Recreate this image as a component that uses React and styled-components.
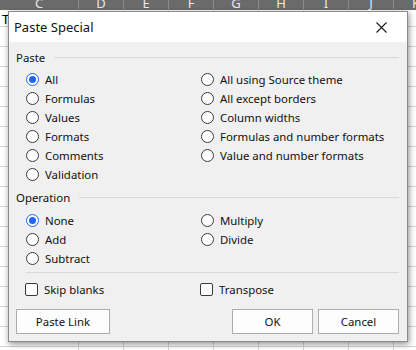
import React from 'react';
import styled, { createGlobalStyle } from 'styled-components';

const GlobalStyle = createGlobalStyle`
  html, body {
    margin: 0;
    padding: 0;
    width: 416px;
    height: 350px;
    overflow: hidden;
    background: #fff;
    font-family: "Noto Sans", "Open Sans", sans-serif;
  }
`;

// Spreadsheet behind the dialog
const Sheet = styled.div`
  position: relative;
  width: 416px;
  height: 350px;
  background-color: #fff;
  overflow: hidden;
`;

const GridLines = styled.div`
  position: absolute;
  inset: 10px 0 0 0;
  background-image: repeating-linear-gradient(to bottom, transparent 0, transparent 16px, #d4d4d4 16px, #d4d4d4 17px, transparent 17px, transparent 20px);
  background-size: 100% 20px;
`;

const HeaderRow = styled.div`
  position: relative;
  display: flex;
  height: 10px;
  background: #6b6b6b;
  overflow: hidden;
`;

const ColHead = styled.div`
  flex: 0 0 ${p => p.$w}px;
  box-sizing: border-box;
  border-right: 1px solid #8c8c8c;
  color: #e8e8e8;
  font-size: 13px;
  line-height: 13px;
  text-align: center;
  margin-top: -3px;
`;

const VLines = styled.div`
  position: absolute;
  left: 0;
  right: 0;
  top: 10px;
  bottom: 0;
  display: flex;
`;

const VCol = styled.div`
  flex: 0 0 ${p => p.$w}px;
  box-sizing: border-box;
  border-right: 1px solid #d4d4d4;
`;

const CellText = styled.div`
  position: absolute;
  left: 2px;
  top: 10px;
  font-size: 13px;
  color: #000;
`;

// Dialog window
const Dialog = styled.div`
  position: absolute;
  left: 8px;
  top: 11px;
  width: 400px;
  height: 331px;
  box-sizing: border-box;
  border: 1px solid #8a8a8a;
  background: #f0f0f0;
  box-shadow: 1px 2px 6px rgba(0, 0, 0, 0.45);
  display: flex;
  flex-direction: column;
  color: #111;
`;

const TitleBar = styled.div`
  height: 30px;
  background: #fff;
  display: flex;
  align-items: center;
  justify-content: space-between;
  padding: 0 20px 0 5px;
  font-size: 13px;
  color: #111;
`;

const CloseIcon = () => (
  <svg width='11' height='11' viewBox='0 0 11 11'>
    <path d='M0.5 0.5 L10.5 10.5 M10.5 0.5 L0.5 10.5' stroke='#1a1a1a' strokeWidth='1.1' fill='none' />
  </svg>
);

const Body = styled.div`
  flex: 1;
  display: flex;
  flex-direction: column;
  padding: 0 8px 0 7px;
  font-size: 11.4px;
`;

const GroupHeader = styled.div`
  display: flex;
  align-items: center;
  height: 16px;
  margin-top: ${p => p.$top}px;
  &::after {
    content: '';
    flex: 1;
    height: 1px;
    background: #d9d9d9;
    margin-left: 9px;
  }
`;

const OptionGrid = styled.div`
  display: grid;
  grid-template-columns: 175px 1fr;
  grid-auto-flow: column;
  grid-template-rows: repeat(${p => p.$rows}, 19px);
  margin-top: ${p => p.$top}px;
  padding-left: 10px;
`;

const Option = styled.div`
  display: flex;
  align-items: center;
  gap: 6px;
  height: 19px;
  white-space: nowrap;
`;

const RadioDot = styled.span`
  box-sizing: border-box;
  width: 13px;
  height: 13px;
  border-radius: 50%;
  border: 1px solid ${p => (p.$on ? '#1f66f0' : '#3a3a3a')};
  background: #fff;
  display: flex;
  align-items: center;
  justify-content: center;
  flex: 0 0 auto;
  &::after {
    content: '';
    display: ${p => (p.$on ? 'block' : 'none')};
    width: 7px;
    height: 7px;
    border-radius: 50%;
    background: #1f66f0;
  }
`;

const Box = styled.span`
  box-sizing: border-box;
  width: 13px;
  height: 13px;
  border-radius: 2px;
  border: 1px solid #3a3a3a;
  background: #fff;
  flex: 0 0 auto;
`;

const Divider = styled.div`
  height: 1px;
  background: #d9d9d9;
  margin: 4px 0 0 10px;
`;

const CheckRow = styled.div`
  display: grid;
  grid-template-columns: 175px 1fr;
  margin-top: 7px;
  padding-left: 10px;
  & > div {
    margin-left: -1px;
  }
`;

const ButtonRow = styled.div`
  display: flex;
  gap: 5px;
  margin-top: 10px;
`;

const Button = styled.div`
  box-sizing: border-box;
  width: ${p => p.$w}px;
  height: 25px;
  border: 1px solid #adadad;
  background: #fdfdfd;
  display: flex;
  align-items: center;
  justify-content: center;
  font-size: 11.4px;
  color: #111;
  ${p => (p.$push ? 'margin-left: auto;' : '')}
`;

const Radio = ({ on, children }) => (
  <Option>
    <RadioDot $on={on} />
    <span>{children}</span>
  </Option>
);

const Check = ({ children }) => (
  <Option>
    <Box />
    <span>{children}</span>
  </Option>
);

const columns = [
  { w: 79, l: 'C' },
  { w: 45, l: 'D' },
  { w: 45, l: 'E' },
  { w: 45, l: 'F' },
  { w: 45, l: 'G' },
  { w: 45, l: 'H' },
  { w: 45, l: 'I' },
  { w: 45, l: 'J' },
  { w: 45, l: 'K' }
];

export default function App() {
  return (
    <>
      <GlobalStyle />
      <Sheet>
        <HeaderRow>
          {columns.map(c => (
            <ColHead key={c.l} $w={c.w}>{c.l}</ColHead>
          ))}
        </HeaderRow>
        <GridLines />
        <VLines>
          {columns.map(c => (
            <VCol key={c.l} $w={c.w} />
          ))}
        </VLines>
        <CellText>T</CellText>

        <Dialog>
          <TitleBar>
            <span>Paste Special</span>
            <CloseIcon />
          </TitleBar>
          <Body>
            <GroupHeader $top={7}>Paste</GroupHeader>
            <OptionGrid $rows={6} $top={5}>
              <Radio on>All</Radio>
              <Radio>Formulas</Radio>
              <Radio>Values</Radio>
              <Radio>Formats</Radio>
              <Radio>Comments</Radio>
              <Radio>Validation</Radio>
              <Radio>All using Source theme</Radio>
              <Radio>All except borders</Radio>
              <Radio>Column widths</Radio>
              <Radio>Formulas and number formats</Radio>
              <Radio>Value and number formats</Radio>
            </OptionGrid>

            <GroupHeader $top={5}>Operation</GroupHeader>
            <OptionGrid $rows={3} $top={6}>
              <Radio on>None</Radio>
              <Radio>Add</Radio>
              <Radio>Subtract</Radio>
              <Radio>Multiply</Radio>
              <Radio>Divide</Radio>
            </OptionGrid>

            <Divider />
            <CheckRow>
              <Check>Skip blanks</Check>
              <Check>Transpose</Check>
            </CheckRow>

            <ButtonRow>
              <Button $w={94}>Paste Link</Button>
              <Button $w={81} $push>OK</Button>
              <Button $w={81}>Cancel</Button>
            </ButtonRow>
          </Body>
        </Dialog>
      </Sheet>
    </>
  );
}
